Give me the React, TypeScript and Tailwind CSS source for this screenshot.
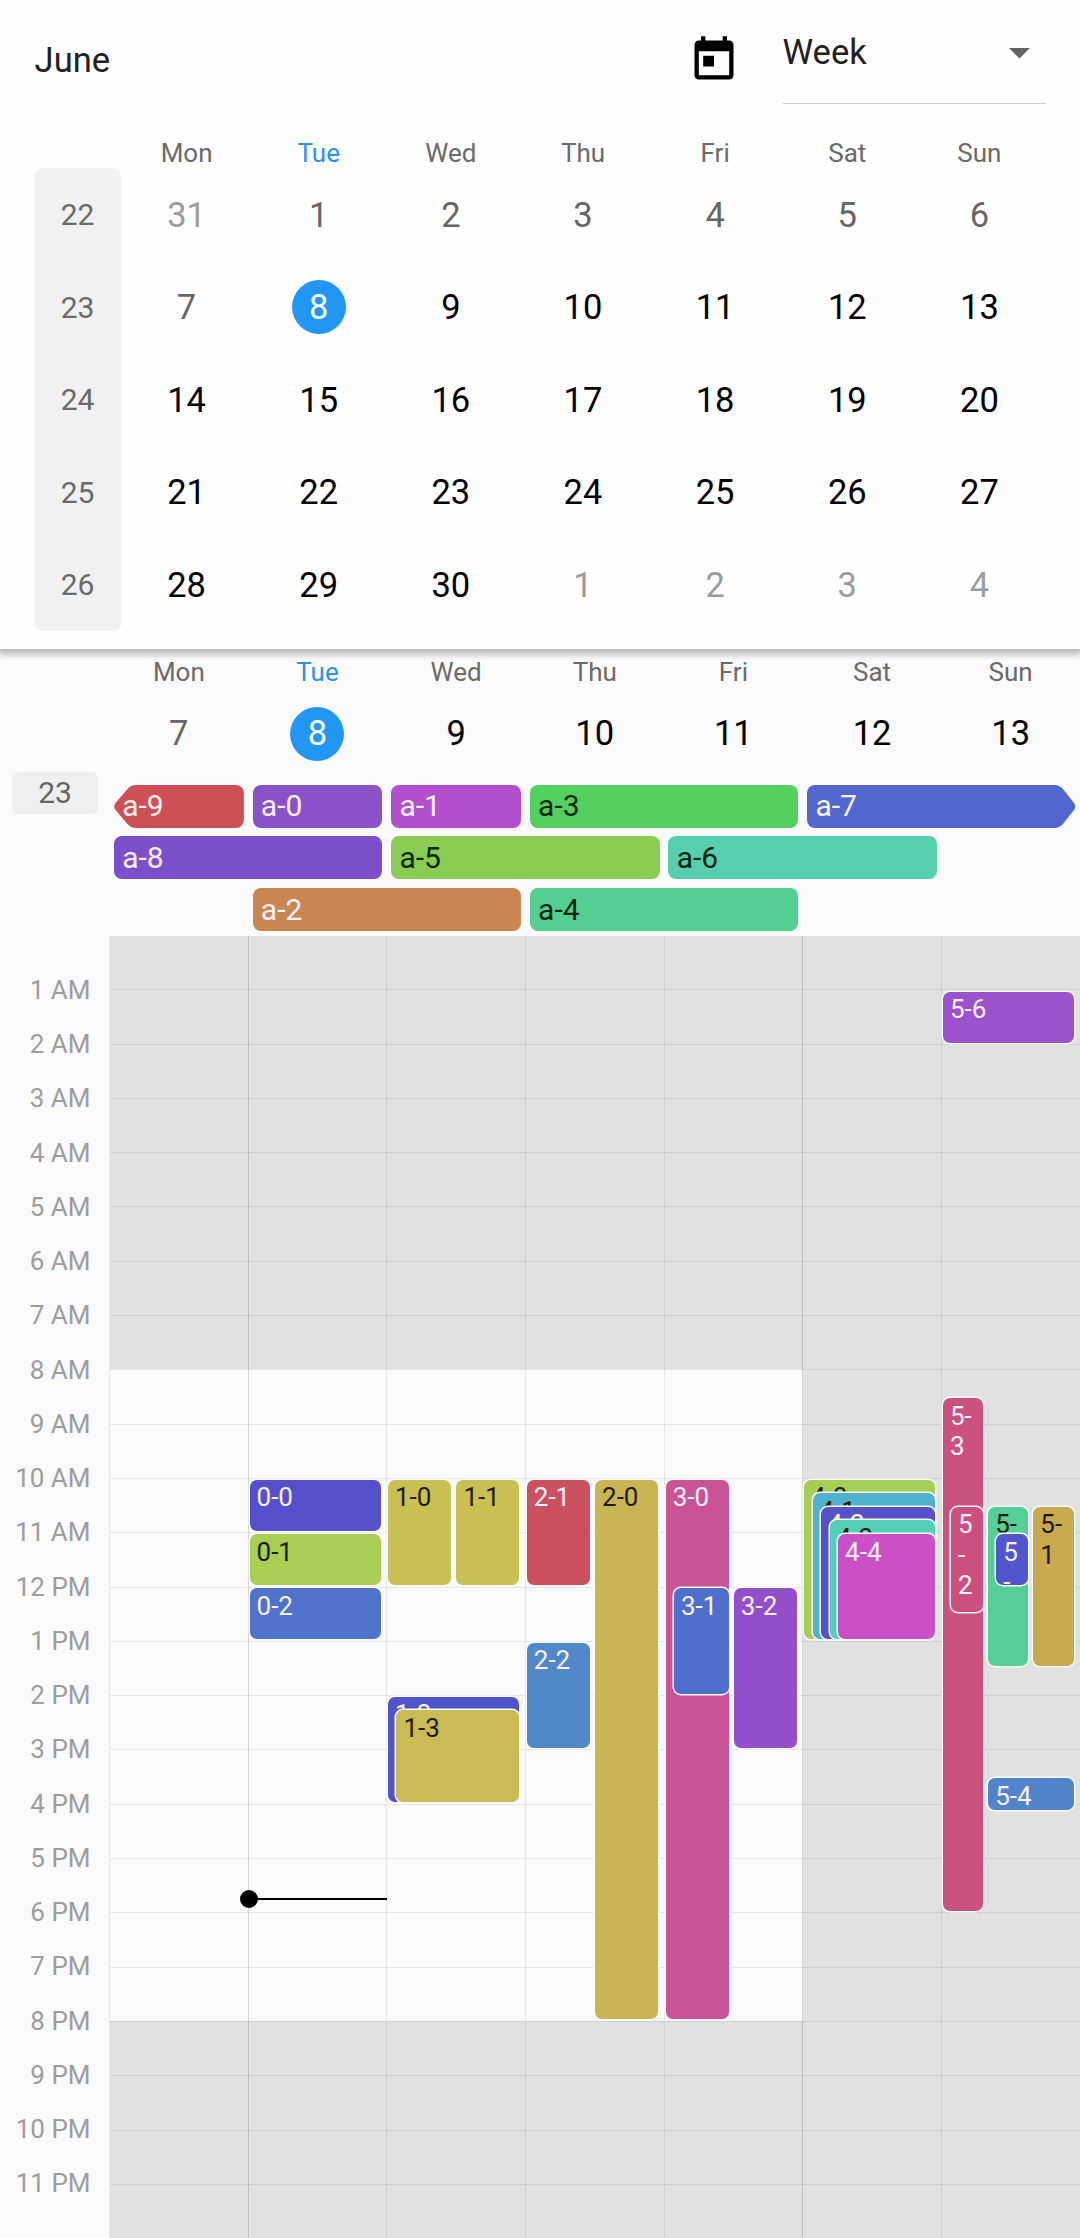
import React from "react";

const DAY_NAMES = ["Mon", "Tue", "Wed", "Thu", "Fri", "Sat", "Sun"];
const TODAY = 1;

type Tone = "muted" | "past" | "today" | "normal";

const WEEKS: { week: number; days: [number, Tone][] }[] = [
  { week: 22, days: [[31, "muted"], [1, "past"], [2, "past"], [3, "past"], [4, "past"], [5, "past"], [6, "past"]] },
  { week: 23, days: [[7, "past"], [8, "today"], [9, "normal"], [10, "normal"], [11, "normal"], [12, "normal"], [13, "normal"]] },
  { week: 24, days: [[14, "normal"], [15, "normal"], [16, "normal"], [17, "normal"], [18, "normal"], [19, "normal"], [20, "normal"]] },
  { week: 25, days: [[21, "normal"], [22, "normal"], [23, "normal"], [24, "normal"], [25, "normal"], [26, "normal"], [27, "normal"]] },
  { week: 26, days: [[28, "normal"], [29, "normal"], [30, "normal"], [1, "muted"], [2, "muted"], [3, "muted"], [4, "muted"]] },
];

const TONES: Record<Tone, string> = {
  muted: "text-[#9c9c9c]",
  past: "text-[#666666]",
  today: "bg-[#2196f3] text-white",
  normal: "text-black",
};

function DayNumber({ value, tone }: { value: number; tone: Tone }) {
  return (
    <span className={`flex size-[54px] items-center justify-center rounded-full text-[34.5px] leading-none ${TONES[tone]}`}>
      {value}
    </span>
  );
}

function DayName({ index }: { index: number }) {
  return (
    <span className={`text-center text-[26px] leading-[30px] ${index === TODAY ? "text-[#2c93e6]" : "text-[#6a6a6a]"}`}>
      {DAY_NAMES[index]}
    </span>
  );
}

function TodayIcon() {
  return (
    <svg viewBox="0 0 24 24" className="size-[52px] fill-black">
      <path d="M19 3h-1V1h-2v2H8V1H6v2H5c-1.11 0-1.99.9-1.99 2L3 19c0 1.1.89 2 2 2h14c1.1 0 2-.9 2-2V5c0-1.1-.9-2-2-2zm0 16H5V8h14v11zM7 10h5v5H7z" />
    </svg>
  );
}

function Toolbar() {
  return (
    <div className="flex h-[138px] items-start pr-[34px] pl-[34.6px]">
      <h1 className="flex-1 pt-[39.5px] text-[34.5px] leading-10 text-[#212121]">June</h1>
      <div className="mr-[43px] pt-[33.5px]">
        <TodayIcon />
      </div>
      <div className="flex h-[104px] w-[263.5px] items-start justify-between border-b border-[#cfcfcf] pt-8 pr-[16px]">
        <span className="text-[34.5px] leading-10 text-[#212121]">Week</span>
        <svg viewBox="0 0 20 10" className="mt-4 h-[10.5px] w-[21px] fill-[#636363]">
          <path d="M0 0h20L10 10z" />
        </svg>
      </div>
    </div>
  );
}

function MonthView() {
  return (
    <section className="relative z-10 h-[649px] bg-[#fefefe] shadow-[0_3px_7px_2px_rgba(0,0,0,0.28)]">
      <Toolbar />
      <div className="flex px-[34.5px]">
        <div className="mt-[30px] flex h-[462.5px] w-[86px] flex-col rounded-lg bg-[#f1f1f1]">
          {WEEKS.map((w) => (
            <span key={w.week} className="flex flex-1 items-center justify-center pt-[2px] text-[30px] leading-none text-[#6a6a6a]">
              {w.week}
            </span>
          ))}
        </div>
        <div className="flex flex-1 flex-col">
          <div className="grid h-[30.5px] grid-cols-7">
            {DAY_NAMES.map((_, i) => (
              <DayName key={i} index={i} />
            ))}
          </div>
          {WEEKS.map((w) => (
            <div key={w.week} className="grid h-[92.5px] grid-cols-7 place-items-center">
              {w.days.map(([value, tone], i) => (
                <DayNumber key={i} value={value} tone={tone} />
              ))}
            </div>
          ))}
        </div>
      </div>
    </section>
  );
}

interface AllDay {
  label: string;
  place: string;
  color: string;
  dark?: boolean;
}

const ALL_DAY: AllDay[] = [
  { label: "a-0", place: "col-start-2 row-start-1", color: "bg-[#8a52c9]" },
  { label: "a-1", place: "col-start-3 row-start-1", color: "bg-[#b34fcd]" },
  { label: "a-3", place: "col-start-4 col-span-2 row-start-1", color: "bg-[#54d060]", dark: true },
  { label: "a-8", place: "col-start-1 col-span-2 row-start-2", color: "bg-[#7b50ca]" },
  { label: "a-5", place: "col-start-3 col-span-2 row-start-2", color: "bg-[#8acd53]", dark: true },
  { label: "a-6", place: "col-start-5 col-span-2 row-start-2", color: "bg-[#55cfad]", dark: true },
  { label: "a-2", place: "col-start-2 col-span-2 row-start-3", color: "bg-[#c98652]" },
  { label: "a-4", place: "col-start-4 col-span-2 row-start-3", color: "bg-[#53cf91]", dark: true },
];

const BAR = "mx-[4.4px] flex h-[43px] items-center pl-[8.3px] text-[30px] leading-none";

function AllDayEvents() {
  return (
    <div className="grid auto-rows-[43px] grid-cols-7 gap-y-[8.8px]">
      <div className={`${BAR} relative col-start-1 row-start-1 text-[#fff0ec]`}>
        <svg viewBox="0 0 130 43" preserveAspectRatio="none" className="absolute inset-0 size-full fill-[#cc5056]">
          <path d="M22 0H122a8 8 0 0 1 8 8V35a8 8 0 0 1-8 8H22Q17 43 13.500 39L1.500 25Q-1 21.500 1.500 18L13.500 4Q17 0 22 0Z" />
        </svg>
        <span className="relative">a-9</span>
      </div>
      <div className={`${BAR} relative col-span-2 col-start-6 row-start-1 text-[#f2f4ff]`}>
        <svg viewBox="0 0 268 43" preserveAspectRatio="none" className="absolute inset-0 size-full fill-[#5366cf]">
          <path d="M8 0H247Q252 0 255.500 4L266.500 18Q269 21.500 266.500 25L255.500 39Q252 43 247 43H8a8 8 0 0 1-8-8V8a8 8 0 0 1 8-8Z" />
        </svg>
        <span className="relative">a-7</span>
      </div>
      {ALL_DAY.map((e) => (
        <div key={e.label} className={`${BAR} rounded-lg ${e.place} ${e.color} ${e.dark ? "text-[#0b260f]" : "text-[#fdf0fb]"}`}>
          {e.label}
        </div>
      ))}
    </div>
  );
}

function WeekHeader() {
  return (
    <div className="flex h-[287px]">
      <div className="flex w-[109.500px] flex-col pt-[122.5px] pl-3">
        <span className="flex h-[42.5px] w-[86px] items-center justify-center rounded-md bg-[#efefef] pt-px text-[30px] leading-none text-[#666666]">
          23
        </span>
      </div>
      <div className="flex flex-1 flex-col">
        <div className="grid h-[57.500px] grid-cols-7 pt-[8px]">
          {DAY_NAMES.map((_, i) => (
            <DayName key={i} index={i} />
          ))}
        </div>
        <div className="mb-[24px] grid h-[54px] grid-cols-7 place-items-center">
          {WEEKS[1].days.map(([value, tone]) => (
            <DayNumber key={value} value={value} tone={tone} />
          ))}
        </div>
        <AllDayEvents />
      </div>
    </div>
  );
}

const HOUR_HEIGHT = 54.25;

interface TimedEvent {
  label: string;
  start: number;
  end: number;
  left: number;
  width: number;
  color: string;
  dark?: boolean;
}

/* Events by weekday; start and end in hours, left and width in pixels of the day's column. */
const EVENTS: TimedEvent[][] = [
  [],
  [
    { label: "0-0", start: 10, end: 11, left: 1.4, width: 131.5, color: "bg-[#5650cb]" },
    { label: "0-1", start: 11, end: 12, left: 1.4, width: 131.5, color: "bg-[#a7cf53]", dark: true },
    { label: "0-2", start: 12, end: 13, left: 1.4, width: 131.5, color: "bg-[#4f72cc]" },
  ],
  [
    { label: "1-0", start: 10, end: 12, left: 1.2, width: 63, color: "bg-[#cac053]", dark: true },
    { label: "1-1", start: 10, end: 12, left: 69.7, width: 63, color: "bg-[#cac053]", dark: true },
    { label: "1-2", start: 14, end: 16, left: 1.2, width: 131.5, color: "bg-[#5054c9]" },
    { label: "1-3", start: 14.25, end: 16, left: 9.7, width: 123, color: "bg-[#cabb54]", dark: true },
  ],
  [
    { label: "2-0", start: 10, end: 20, left: 69.6, width: 63, color: "bg-[#cab554]", dark: true },
    { label: "2-1", start: 10, end: 12, left: 1.4, width: 63, color: "bg-[#cb5060]" },
    { label: "2-2", start: 13, end: 15, left: 1.4, width: 63, color: "bg-[#5188ca]" },
  ],
  [
    { label: "3-0", start: 10, end: 20, left: 1.6, width: 63, color: "bg-[#ca5398]" },
    { label: "3-1", start: 12, end: 14, left: 9.9, width: 54.7, color: "bg-[#4e70cc]" },
    { label: "3-2", start: 12, end: 15, left: 69.8, width: 63, color: "bg-[#924fc9]" },
  ],
  [
    { label: "4-0", start: 10, end: 13, left: 1.2, width: 131, color: "bg-[#a5cf54]", dark: true },
    { label: "4-1", start: 10.25, end: 13, left: 9.8, width: 122.6, color: "bg-[#4fb2cc]", dark: true },
    { label: "4-2", start: 10.5, end: 13, left: 18.4, width: 114, color: "bg-[#5650c9]" },
    { label: "4-3", start: 10.75, end: 13, left: 27, width: 105.4, color: "bg-[#54cfba]", dark: true },
    { label: "4-4", start: 11, end: 13, left: 35.4, width: 97, color: "bg-[#cb50c8]" },
  ],
  [
    { label: "5-6", start: 1, end: 2, left: 1.6, width: 131.4, color: "bg-[#9c52cd]" },
    { label: "5-\n3", start: 8.5, end: 18, left: 1.6, width: 39.6, color: "bg-[#cb527f]" },
    { label: "5\n-\n2", start: 10.5, end: 12.5, left: 9.6, width: 31.6, color: "bg-[#cb5080]" },
    { label: "5-\n0", start: 10.5, end: 13.5, left: 46.8, width: 40, color: "bg-[#53cf97]", dark: true },
    { label: "5\n-\n5", start: 11, end: 12, left: 55, width: 31.6, color: "bg-[#5057cd]" },
    { label: "5-\n1", start: 10.5, end: 13.5, left: 92, width: 41, color: "bg-[#c9aa50]", dark: true },
    { label: "5-4", start: 15.5, end: 16.15, left: 46.8, width: 86.2, color: "bg-[#5085cb]" },
  ],
];

function EventBlock({ event }: { event: TimedEvent }) {
  return (
    <div
      className={`absolute overflow-hidden rounded-[7px] pt-[2.500px] pl-[7px] text-[26px] leading-[30.4px] whitespace-pre shadow-[0_0_0_1.5px_#fafafa] ${event.color} ${event.dark ? "text-[#1f1a08]" : "text-[#fbf0fb]"}`}
      style={{
        top: event.start * HOUR_HEIGHT + 1.3,
        height: (event.end - event.start) * HOUR_HEIGHT - 3.2,
        left: event.left,
        width: event.width,
      }}
    >
      {event.label}
    </div>
  );
}

function hourLabel(hour: number) {
  return `${hour > 12 ? hour - 12 : hour} ${hour < 12 ? "AM" : "PM"}`;
}

function TimeColumn() {
  return (
    <div className="flex w-[109.500px] flex-col pt-[26.800px] pr-[19px]">
      {Array.from({ length: 23 }, (_, i) => (
        <span key={i} className="flex h-[54.25px] items-center justify-end text-[26px] leading-none text-[#9d9d9d]">
          {hourLabel(i + 1)}
        </span>
      ))}
    </div>
  );
}

function DayColumn({ day }: { day: number }) {
  const strong = day === 1 || day === 5;
  return (
    <div className="relative flex flex-1 flex-col">
      {Array.from({ length: 24 }, (_, hour) => {
        const working = day < 5 && hour >= 8 && hour < 20;
        return (
          <div
            key={hour}
            className={`flex-1 border-black/[0.075] ${hour > 0 ? "border-t" : ""} ${working ? "bg-[#fafafa]" : "bg-[#e1e1e1]"}`}
          />
        );
      })}
      <div className={`absolute inset-y-0 -left-[0.3px] w-px ${strong ? "bg-black/[0.14]" : "bg-black/[0.07]"}`} />
      {EVENTS[day].map((event) => (
        <EventBlock key={event.label} event={event} />
      ))}
      {day === TODAY && (
        <div className="absolute top-[954px] -left-[8.500px] z-10 flex w-[147px] items-center">
          <span className="size-[18px] rounded-full bg-black" />
          <span className="h-[2px] flex-1 bg-black" />
        </div>
      )}
    </div>
  );
}

export default function App() {
  return (
    <main className="flex h-[2238px] w-[1080px] flex-col overflow-hidden bg-[#fafafa] font-[Roboto,sans-serif]">
      <MonthView />
      <WeekHeader />
      <div className="flex h-[1302px]">
        <TimeColumn />
        <div className="flex flex-1">
          {DAY_NAMES.map((name, i) => (
            <DayColumn key={name} day={i} />
          ))}
        </div>
      </div>
    </main>
  );
}
